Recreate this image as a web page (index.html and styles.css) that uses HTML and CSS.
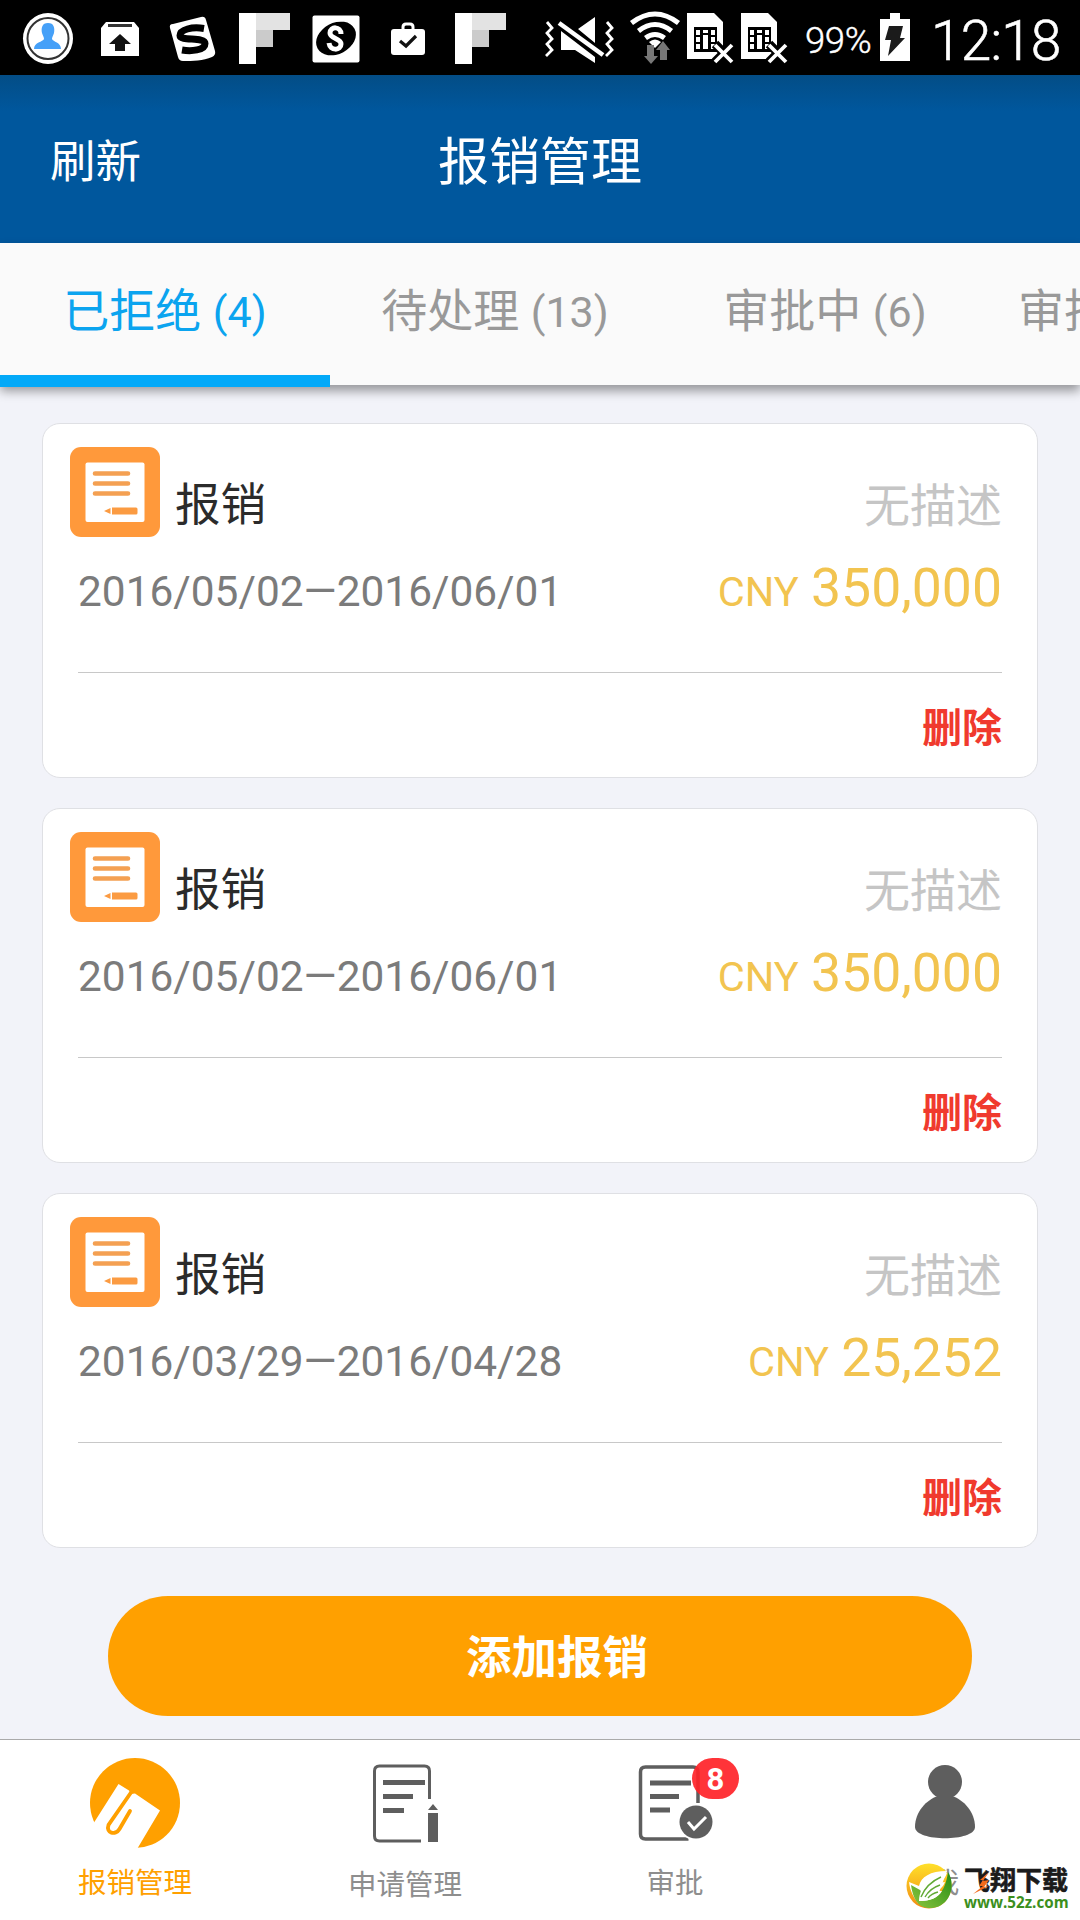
FILE: index.html
```html
<!DOCTYPE html>
<html lang="zh-CN">
<head>
<meta charset="utf-8">
<title>报销管理</title>
<link rel="stylesheet" href="styles.css">
</head>
<body>
<svg class="defs" width="0" height="0" aria-hidden="true">
  <symbol id="flip" viewBox="0 0 51 51"><path fill="#fff" d="M0 0h17v51H0z"/><path fill="#e3e3e3" d="M17 0h34v17H17z"/><path fill="#cbcbcb" d="M17 17h17v17H17z"/></symbol>
  <symbol id="sim" viewBox="0 0 48 51">
    <path fill="#fff" d="M0 0h27l9 9v37H0z"/><path d="M7 14h23v25H7z"/>
    <path fill="#fff" d="M9 17h4v5H9zM9 24h4v5H9zM9 31h4v5H9zM16 17h5v3h-5zM16 22h5v14h-5zM24 17h4v5h-4zM24 24h4v5h-4zM24 31h4v5h-4z"/>
    <path d="M28 31l18 18M45 32L28 49" stroke="#000" stroke-width="9"/>
    <path d="M28 32l17 17M45 32L28 49" stroke="#fff" stroke-width="3.800"/>
  </symbol>
  <symbol id="claim" viewBox="0 0 90 90">
    <rect width="90" height="90" rx="11" fill="#ff993b"/><rect x="15.500" y="15.500" width="59" height="59.500" rx="2" fill="#fff"/>
    <path d="M25 26.500h33M25 36.500h33M25 46.500h33" stroke="#f4a052" stroke-width="4.600" stroke-linecap="round"/>
    <path fill="#fb9b42" d="M42 60.500h24q1.500 0 1.500 1.500v4q0 1.500-1.500 1.500H42zM40.500 61v6L34 64z"/>
  </symbol>
</svg>
<div class="screen">
  <div class="status">
    <svg class="status-icons" width="1080" height="75" viewBox="0 0 1080 75">
      <ellipse cx="48" cy="38.500" rx="25" ry="25.500" fill="#fff"/><circle cx="48" cy="38.500" r="20.500" fill="#fff" stroke="#333" stroke-width="2"/>
      <path fill="#45a0f8" d="M48 23c6 0 7 5 6 10-1 3-2 4-2 6 1 3 9 3 9 10H34c0-7 9-7 10-10 0-2-1-3-2-6-1-5 0-10 6-10z"/>
      <path fill="#fff" d="M106 22h28l5 6v28h-38V28z"/><path d="M108 25.500h24" stroke="#333" stroke-width="3"/><path fill="#111" d="M120 34l11 10h-6v7H115v-7h-6z"/>
      <path fill="#fff" d="M173 24l28-7q4-1 5 3l9 31q1 4-3 6c-9 4-19 4-29 4q-4 0-5-4l-8-29q-1-4 3-4z"/>
      <path d="M204 28.500c-12-2-24 1-24 7 0 6 25 1 25 8 0 7-14 8-23 6.500" fill="none" stroke="#000" stroke-width="7"/>
      <use href="#flip" x="239" y="13" width="51" height="51"/>
      <rect x="312.500" y="15.500" width="47" height="47" rx="2" fill="#fff"/><ellipse cx="336" cy="38.500" rx="21" ry="15.500" transform="rotate(-28 336 38.500)"/>
      <path d="M341 34c0-8-11-8-11-1 0 6 11 5 11 11 0 7-11 7-12-1" fill="none" stroke="#fff" stroke-width="5"/>
      <path d="M403 30v-3q0-3 3-3h4q3 0 3 3v3" fill="none" stroke="#fff" stroke-width="3"/><rect x="391" y="29" width="34" height="26" rx="3" fill="#fff"/><path d="M400 41l6 5 10-10" fill="none" stroke="#111" stroke-width="3.200"/>
      <use href="#flip" x="455" y="13" width="51" height="51"/>
      <path d="M547 22l5 6-5 5 5 6-5 5 5 6-6 6M607 22l5 6-5 5 5 6-5 5 5 6-6 6" fill="none" stroke="#fff" stroke-width="2.800"/>
      <path fill="#fff" d="M561 31l34 26v6l-20-13h-14zM595 17v26l-17-14z"/><path d="M559 22l44 33" stroke="#000" stroke-width="9"/><path d="M559 23l44 32" stroke="#fff" stroke-width="4.500"/>
      <g fill="none" stroke="#fff" stroke-width="5"><path d="M631.500 23q23.500-18 47 0M638.500 31q16.500-13 33 0M645.500 38q9.500-7 19 0"/></g><path fill="#fff" d="M649 42q6-5 12 0l-6 6z"/>
      <path fill="#777" d="M647 45h7v11h4l-7 8-7-8h3zM663 41l7 9h-3v10h-7V50h-4z"/>
      <use href="#sim" x="687" y="13" width="48" height="51"/><use href="#sim" x="741" y="13" width="48" height="51"/>
      <path fill="#fff" d="M890 13h10v6h10v42h-30V19h10z"/><path fill="#1b1b1b" d="M889 26h14l-3 12h5l-17 18 3-16h-6z"/>
    </svg>
    <span class="battery">99%</span><span class="clock">12:18</span>
  </div>
  <header class="header"><span class="refresh">刷新</span><h1 class="title">报销管理</h1><span></span></header>
  <nav class="tabs"><span class="tab tab-active">已拒绝 <span class="count">(4)</span></span><span class="tab">待处理 <span class="count">(13)</span></span><span class="tab">审批中 <span class="count">(6)</span></span><span class="tab tab-cut">审批</span></nav>
  <main class="list">
    <article class="card">
      <div class="card-head"><svg class="card-icon" width="90" height="90"><use href="#claim"/></svg><span class="name">报销</span><span class="desc">无描述</span></div>
      <div class="card-info"><span class="date">2016/05/02—2016/06/01</span><span class="amount"><small>CNY</small> 350,000</span></div>
      <div class="card-foot">删除</div>
    </article>
    <article class="card">
      <div class="card-head"><svg class="card-icon" width="90" height="90"><use href="#claim"/></svg><span class="name">报销</span><span class="desc">无描述</span></div>
      <div class="card-info"><span class="date">2016/05/02—2016/06/01</span><span class="amount"><small>CNY</small> 350,000</span></div>
      <div class="card-foot">删除</div>
    </article>
    <article class="card">
      <div class="card-head"><svg class="card-icon" width="90" height="90"><use href="#claim"/></svg><span class="name">报销</span><span class="desc">无描述</span></div>
      <div class="card-info"><span class="date">2016/03/29—2016/04/28</span><span class="amount"><small>CNY</small> 25,252</span></div>
      <div class="card-foot">删除</div>
    </article>
    <button class="add">添加报销</button>
  </main>
  <footer class="bottom">
    <div class="item item-active">
      <svg width="90" height="90" viewBox="0 0 90 90"><circle cx="45" cy="45" r="45" fill="#ffa000"/><path fill="#fff" d="M28.500 26L39 32.500 41 36 45 35.500 70 52.500 46.500 92H0V71l5-8z"/><path d="M41 34.500L18.500 67c-3 8 7 11 11 4L40 53" fill="none" stroke="#ffa000" stroke-width="3.800" stroke-linecap="round"/></svg>
      <span>报销管理</span>
    </div>
    <div class="item item-low">
      <svg width="90" height="90" viewBox="0 0 90 90"><path d="M69.500 41V13q0-5-5-5H19.500q-5 0-5 5v65q0 5 5 5H61" fill="none" stroke="#5e5e5e" stroke-width="3"/><path d="M23 24.500h42M23 38.500h30M23 52.500h21" stroke="#5e5e5e" stroke-width="5"/><path fill="#5e5e5e" d="M68 55h10v29H68zM73 46l5 6H68z"/></svg>
      <span>申请管理</span>
    </div>
    <div class="item">
      <div class="badged">
        <svg width="90" height="90" viewBox="0 0 90 90"><path d="M68 45V14q0-5-5-5H15.500q-5 0-5 5v62q0 5 5 5h43" fill="none" stroke="#5e5e5e" stroke-width="3.500"/><path d="M20 25h41M20 38.500h29M20 52h20" stroke="#5e5e5e" stroke-width="5"/><circle cx="66" cy="64" r="18.500" fill="#fff"/><circle cx="66" cy="64" r="16.500" fill="#5e5e5e"/><path d="M58 64l6 7 12-12" fill="none" stroke="#fff" stroke-width="3"/></svg>
        <b class="badge">8</b>
      </div>
      <span>审批</span>
    </div>
    <div class="item">
      <svg width="90" height="90" viewBox="0 0 90 90"><circle cx="45" cy="24" r="17" fill="#5e5e5e"/><path fill="#5e5e5e" d="M38 38h14c12 4 23 16 23 31 0 15-60 15-60 0 0-15 11-27 23-31z"/></svg>
      <span>我</span>
    </div>
  </footer>
  <div class="mark">
    <svg width="46" height="46" viewBox="0 0 46 46"><defs><linearGradient id="sun" x2="0" y2="1"><stop stop-color="#ffe02a"/><stop offset="1" stop-color="#f18a12"/></linearGradient><linearGradient id="leaf" x1="1" x2="0" y2="1"><stop stop-color="#258c13"/><stop offset="1" stop-color="#8cc63f"/></linearGradient></defs>
      <circle cx="23" cy="23" r="22.500" fill="url(#sun)"/><path fill="#fff" d="M41 8C24 8 15 14 13 23L3 19c1 9 5 16 9 21l17 0z"/><path fill="url(#leaf)" d="M42 9c9 14 1 36-18 36C12 45 7 36 5 22l9 5c3 3 0 8-1 11 17 0 26-7 29-29z"/>
      <path fill="#fff" d="M13 38c1-16 10-26 28-28-2 5-4 8-9 10l7-1c-2 5-5 8-10 9l7 0c-4 7-12 10-23 10z"/><path d="M15 34c4-10 11-16 20-20M19 34c4-7 9-10 15-12M22 35c3-4 6-5 10-6" fill="none" stroke="#62aa35" stroke-width="1.400"/></svg>
    <div class="mark-text"><b class="mark-name">飞翔下载</b><b class="mark-url">www.52z.com</b></div>
    <svg class="mark-flash" width="22" height="24" viewBox="0 0 22 24"><path fill="#f26a1b" d="M17 1l-6 9 6-1-5 7 5-1L1 23l10-8-4 0 4-6-3 0z"/></svg>
  </div>
</div>
</body>
</html>
```
FILE: styles.css
```css
* { box-sizing: border-box; }
body { margin: 0; font-family: Roboto, "Noto Sans CJK SC", sans-serif; }
.defs { position: absolute; }
.screen { position: relative; width: 1080px; height: 1920px; display: flex; flex-direction: column; overflow: hidden; background: #f2f3f9; }
.status { position: relative; height: 75px; flex: none; display: flex; justify-content: flex-end; align-items: center; background: #000; color: #fff; }
.status-icons { position: absolute; left: 0; top: 0; }
.battery { font-size: 36.500px; font-weight: 300; width: 66px; margin-right: 60px; line-height: 75px; padding-top: 6px; letter-spacing: -.4px; white-space: nowrap; -webkit-text-stroke: .4px #fff; }
.clock { font-size: 55px; font-weight: 300; width: 149px; line-height: 75px; padding-top: 7px; letter-spacing: -.8px; -webkit-text-stroke: .6px #fff; }
.header { height: 168px; flex: none; display: grid; grid-template-columns: 1fr auto 1fr; align-items: center; padding: 0 50px 3px; color: #fff; background: linear-gradient(#034d86, #00579d 36px); }
.refresh { font-size: 45.500px; }
.title { margin: 0; font-size: 51px; font-weight: 400; }
.tabs { position: relative; z-index: 1; height: 142px; flex: none; display: flex; background: #fafafa; box-shadow: 0 6px 10px rgba(0, 0, 0, .38); }
.tab { flex: none; width: 330px; height: 144px; line-height: 137px; text-align: center; font-size: 46px; color: #999; }
.count { font-size: 43px; }
.tab-active { color: #0ba4ef; border-bottom: 12px solid #03a9f8; }
.tab-cut { width: 88px; padding-left: 28px; white-space: nowrap; }
.list { flex: 1; display: flex; flex-direction: column; gap: 30px; padding: 38px 42px 0; }
.card { height: 355px; flex: none; padding: 23px 35px 0 27px; background: #fff; border: 1px solid #dfe0e4; border-radius: 18px; }
.card-head { display: flex; align-items: center; height: 90px; }
.name { margin: 28px 0 0 15px; font-size: 45.500px; line-height: 66px; color: #2b2b2b; }
.desc { margin: 27px 0 0 auto; font-size: 46px; line-height: 66px; color: #c5c5c5; }
.card-info { height: 136px; margin-left: 8px; padding-top: 19px; display: flex; justify-content: space-between; align-items: baseline; border-bottom: 1px solid #c8c8c8; }
.date { font-size: 42.400px; color: #7b7b7b; }
.amount { font-size: 53.500px; color: #f2c450; }
.amount small { font-size: 41.500px; margin-right: -1px; }
.card-foot { text-align: right; font-size: 40px; line-height: 111px; font-weight: 700; color: #f03a2e; }
.add { width: 864px; height: 120px; margin: 18px auto 0; padding: 0 0 4px 34px; border: 0; border-radius: 60px; background: #ffa000; color: #fff; font: 700 45.500px Roboto, "Noto Sans CJK SC", sans-serif; }
.bottom { height: 181px; flex: none; display: flex; border-top: 1px solid #aaa; background: #fff; }
.item { width: 270px; padding-top: 18px; display: flex; flex-direction: column; align-items: center; font-size: 28.500px; line-height: 42px; color: #8e8e8e; }
.item > span { margin-top: 15px; }
.item-low > span { margin-top: 17px; }
.item-active { color: #ffa000; }
.badged { position: relative; height: 90px; }
.badge { position: absolute; left: 62px; top: 0; width: 47px; height: 41px; border-radius: 21px; background: rgba(255, 35, 40, .92); color: #fff; font-size: 31px; line-height: 43px; text-align: center; }
.mark { position: absolute; left: 906px; top: 1863px; display: flex; gap: 12px; }
.mark-text { display: flex; flex-direction: column; padding-top: 4px; }
.mark-name { font-size: 26px; line-height: 28px; color: #1b1b1b; -webkit-text-stroke: .6px #1b1b1b; }
.mark-url { font: 700 15.200px/15px "Open Sans", sans-serif; color: #3c8f1d; }
.mark-flash { position: absolute; left: 66px; top: 8px; }
```
